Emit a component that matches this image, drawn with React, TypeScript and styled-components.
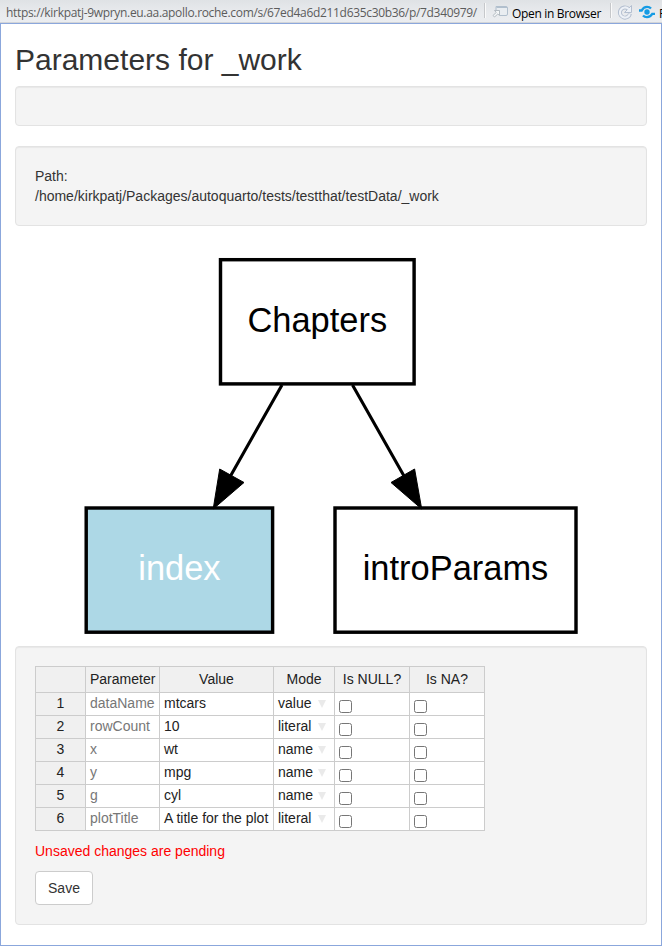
import React from "react";
import styled, { createGlobalStyle } from "styled-components";

const GlobalStyle = createGlobalStyle`
  * { box-sizing: border-box; }
  body {
    margin: 0;
    background: #fff;
    color: #333;
    font: 14px/20px "Liberation Sans", Arial, sans-serif;
  }
`;

const Window = styled.div`
  display: flex;
  flex-direction: column;
  width: 662px;
  height: 946px;
  overflow: hidden;
`;

const Toolbar = styled.header`
  display: flex;
  align-items: center;
  flex: none;
  height: 23px;
  padding: 2px 0 0 6px;
  overflow: hidden;
  white-space: nowrap;
  background: linear-gradient(#dfe2e5, #e9ebee 60%, #ebedf0);
  border-bottom: 1px solid #d3d5d8;
  font: 12px/20px "Open Sans", "Noto Sans", sans-serif;
`;

const Address = styled.span`
  flex: none;
  width: 478px;
  padding-top: 1px;
  color: #5c5c5c;
  letter-spacing: -0.32px;
`;

const Separator = styled.span`
  flex: none;
  width: 2px;
  height: 15px;
  margin-top: -3px;
  background: linear-gradient(90deg, #c6c8cb 50%, #fafafa 50%);
`;

const OpenButton = styled.span`
  display: flex;
  align-items: center;
  flex: none;
  width: 124px;
  padding-left: 6px;
  gap: 4px;
  color: #000;
  letter-spacing: -0.33px;

  span { padding-top: 3px; }
`;

const ToolIcon = styled.svg`
  flex: none;
  display: block;
  margin-top: -1px;
`;

const Publish = styled.span`
  display: flex;
  align-items: center;
  flex: none;
  gap: 6px;
  padding-left: 5px;
  color: #000;

  span { padding-top: 3px; margin-left: -2px; }
`;

const Viewer = styled.main`
  flex: 1;
  padding: 19px 14px 0;
  border: 1px solid #8ba7dc;
`;

const Title = styled.h1`
  margin: 0 0 10px;
  font-size: 30px;
  font-weight: 400;
  line-height: 33px;
`;

const Well = styled.section<{ $last?: boolean }>`
  min-height: 20px;
  margin-bottom: ${(p) => (p.$last ? 0 : 20)}px;
  padding: 19px;
  background: #f4f4f4;
  border: 1px solid #e3e3e3;
  border-radius: 4px;
  box-shadow: inset 0 1px 1px rgba(0, 0, 0, 0.05);
`;

const Graph = styled.svg`
  display: block;
  width: 632px;
  height: 400px;
  font-family: "Liberation Sans", Arial, sans-serif;
  font-size: 34.44px;
`;

const ParamTable = styled.table`
  width: 450px;
  table-layout: fixed;
  border-collapse: collapse;
  border-spacing: 0;
  line-height: 21px;
`;

const HeadCell = styled.th`
  height: 26px;
  padding: 0 4px;
  overflow: hidden;
  white-space: nowrap;
  background: #f0f0f0;
  border: 1px solid #ccc;
  color: #222;
  font-weight: 400;
  text-align: center;
`;

const RowHead = styled(HeadCell)`
  height: 23px;
  padding: 0;
  vertical-align: top;
`;

const Cell = styled.td<{ $muted?: boolean }>`
  height: 23px;
  padding: 0 4px;
  background: #fff;
  border: 1px solid #ccc;
  color: ${(p) => (p.$muted ? "#777" : "#222")};
  white-space: nowrap;
  vertical-align: top;
`;

const ModeValue = styled.div`
  display: flex;
  align-items: center;
  justify-content: space-between;
  height: 21px;
  margin-right: 4px;
`;

const DropArrow = styled.span`
  width: 0;
  border: 4px solid transparent;
  border-top: 8px solid #eaeaea;
  border-bottom: 0;
`;

const Check = styled.input`
  display: block;
  width: 13px;
  height: 13px;
  margin: 7px 0 0;
`;

const Pending = styled.p`
  margin: 10px 0;
  color: #f00;
`;

const SaveButton = styled.button`
  display: block;
  width: 58px;
  height: 34px;
  padding: 0;
  background: #fff;
  border: 1px solid #ccc;
  border-radius: 4px;
  color: #333;
  font: inherit;
`;

const columns = [50, 74, 114, 61, 75, 75];

const rows = [
  ["dataName", "mtcars", "value"],
  ["rowCount", "10", "literal"],
  ["x", "wt", "name"],
  ["y", "mpg", "name"],
  ["g", "cyl", "name"],
  ["plotTitle", "A title for the plot", "literal"],
];

const nodes = [
  { label: "Chapters", x: 220.5, y: 259.7, w: 193.6, fill: "#fff", color: "#000" },
  { label: "index", x: 86.2, y: 508, w: 186.4, fill: "#add8e6", color: "#fff" },
  { label: "introParams", x: 335, y: 508, w: 241, fill: "#fff", color: "#000" },
];

function ChapterGraph() {
  return (
    <Graph viewBox="15 246 632 400">
      {nodes.map((n) => (
        <g key={n.label}>
          <rect x={n.x} y={n.y} width={n.w} height={124.2} fill={n.fill} stroke="#000" strokeWidth={3.44} />
          <text x={n.x + n.w / 2} y={n.y + 72.2} textAnchor="middle" fill={n.color}>
            {n.label}
          </text>
        </g>
      ))}
      <g stroke="#000" strokeWidth={3.1}>
        <path d="M282 385L230.500 476M352.500 385L404 476" />
        <path strokeWidth={1} d="M219.700 469L244 482.500L213.200 509ZM414.600 469L391 482.500L421.700 509Z" />
      </g>
    </Graph>
  );
}

export default function App() {
  return (
    <>
      <GlobalStyle />
      <Window>
        <Toolbar>
          <Address>https://kirkpatj-9wpryn.eu.aa.apollo.roche.com/s/67ed4a6d211d635c30b36/p/7d340979/</Address>
          <Separator />
          <OpenButton>
            <ToolIcon width="16" height="13" viewBox="0 0 16 13">
              <path d="M4 1.500h10q1.500 0 1.500 1.500v6q0 1.500-1.500 1.500H8" fill="#e9edf1" stroke="#b1bfcd" />
              <path d="M4 1.500V5M4.500 2.500h10.500" stroke="#b1bfcd" fill="none" />
              <path d="M2.500 5.500h5v5L5.800 9L2.500 12L1 10.500L4.300 7.400Z" fill="#f5f7f8" stroke="#a5adb5" strokeWidth=".8" />
            </ToolIcon>
            <span>Open in Browser</span>
          </OpenButton>
          <Separator />
          <Publish>
            <ToolIcon width="16" height="16" viewBox="0 0 16 16" fill="none">
              <path d="M11.300 4.600A5.100 5.100 0 1 0 13 9.700" stroke="#b4bfd0" strokeWidth="4" />
              <path d="M14.500 1.500V8.500H7.500L10 6Z" fill="#edf1f7" stroke="#b4bfd0" />
              <path d="M11.600 5A5.100 5.100 0 1 0 12.800 10.200" stroke="#edf1f7" strokeWidth="2.200" />
            </ToolIcon>
            <ToolIcon width="16" height="14" viewBox="0 0 16 14" fill="none" stroke="#159be4" strokeWidth="2.300">
              <path d="M0 5.500H2.700Q4.500 1.800 8 1.800Q10.500 1.800 12 3.500M16 8.800H13.300Q11.500 12.200 8 12.200Q5.500 12.200 4 10.500" />
              <circle cx="8" cy="7" r="2.700" fill="#159be4" stroke="none" />
            </ToolIcon>
            <span>Publish</span>
          </Publish>
        </Toolbar>
        <Viewer>
          <Title>Parameters for _work</Title>
          <Well />
          <Well>
            Path:
            <br />
            /home/kirkpatj/Packages/autoquarto/tests/testthat/testData/_work
          </Well>
          <ChapterGraph />
          <Well $last>
            <ParamTable>
              <colgroup>
                {columns.map((w, i) => (
                  <col key={i} width={w} />
                ))}
              </colgroup>
              <thead>
                <tr>
                  {["", "Parameter", "Value", "Mode", "Is NULL?", "Is NA?"].map((h) => (
                    <HeadCell key={h}>{h}</HeadCell>
                  ))}
                </tr>
              </thead>
              <tbody>
                {rows.map(([name, value, mode], i) => (
                  <tr key={name}>
                    <RowHead>{i + 1}</RowHead>
                    <Cell $muted>{name}</Cell>
                    <Cell>{value}</Cell>
                    <Cell>
                      <ModeValue>
                        {mode}
                        <DropArrow />
                      </ModeValue>
                    </Cell>
                    <Cell>
                      <Check type="checkbox" />
                    </Cell>
                    <Cell>
                      <Check type="checkbox" />
                    </Cell>
                  </tr>
                ))}
              </tbody>
            </ParamTable>
            <Pending>Unsaved changes are pending</Pending>
            <SaveButton>Save</SaveButton>
          </Well>
        </Viewer>
      </Window>
    </>
  );
}
